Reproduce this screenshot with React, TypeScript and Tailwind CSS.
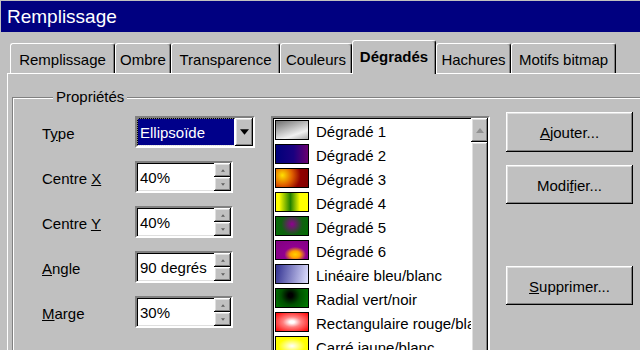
const TABS = [
  { label: "Remplissage", w: "w-[105px]" },
  { label: "Ombre", w: "w-[56px]" },
  { label: "Transparence", w: "w-[109px]" },
  { label: "Couleurs", w: "w-[72px]" },
  { label: "Dégradés", w: "w-[84px]", active: true },
  { label: "Hachures", w: "w-[75px]" },
  { label: "Motifs bitmap", w: "w-[105px]" },
];

const GRADIENTS = [
  { label: "Dégradé 1", bg: "bg-[linear-gradient(160deg,#6e6e6e,#f0f0f0_70%,#a8a8a8)]" },
  { label: "Dégradé 2", bg: "bg-[linear-gradient(90deg,#00007a,#1a0080_55%,#6a0070)]" },
  { label: "Dégradé 3", bg: "bg-[radial-gradient(circle_at_20%_35%,#ffe000,#e06000_35%,#900000_65%,#800000)]" },
  { label: "Dégradé 4", bg: "bg-[linear-gradient(90deg,#ffff00_10%,#208000_45%,#ffff00_75%)]" },
  { label: "Dégradé 5", bg: "bg-[radial-gradient(circle_at_50%_40%,#900090,#106010_55%,#007000)]" },
  { label: "Dégradé 6", bg: "bg-[radial-gradient(ellipse_at_60%_75%,#ffd000,#ffa000_18%,#900090_40%,#800080)]" },
  { label: "Linéaire bleu/blanc", bg: "bg-[linear-gradient(100deg,#303090,#e0e0ff)]" },
  { label: "Radial vert/noir", bg: "bg-[radial-gradient(circle_at_45%_35%,#000_10%,#005000_45%,#008000)]" },
  { label: "Rectangulaire rouge/blanc", bg: "bg-[radial-gradient(ellipse_at_center,#fff_10%,#ff8080_40%,#ff0000)]" },
  { label: "Carré jaune/blanc", bg: "bg-[radial-gradient(#fff,#ffff00_60%)]" },
];

const sunken =
  "border-2 border-t-[#808080] border-l-[#808080] border-r-white border-b-white shadow-[inset_1px_1px_0_#000,inset_-1px_-1px_0_#dfdfdf]";
const raised =
  "shadow-[inset_-1px_-1px_0_#000,inset_1px_1px_0_#fff,inset_-2px_-2px_0_#808080,inset_2px_2px_0_#dfdfdf]";

function Arrow({ up, color = "#000", size = 7 }: { up?: boolean; color?: string; size?: number }) {
  return (
    <svg width={size} height={Math.ceil(size / 2) + 1} viewBox="0 0 8 5">
      <polygon points={up ? "0,5 8,5 4,0" : "0,0 8,0 4,5"} fill={color} />
    </svg>
  );
}

function Spin({ value }: { value: string }) {
  return (
    <div className={`flex h-[32px] w-[98px] bg-white ${sunken}`}>
      <div className="flex flex-1 items-center pl-[3px] pt-[2px]">{value}</div>
      <div className="flex w-[17px] flex-col">
        <div className={`flex flex-1 items-center justify-center bg-[#c0c0c0] ${raised}`}>
          <Arrow up color="#606060" size={4} />
        </div>
        <div className={`flex flex-1 items-center justify-center bg-[#c0c0c0] ${raised}`}>
          <Arrow color="#606060" size={4} />
        </div>
      </div>
    </div>
  );
}

function Row({ label, children }: { label: React.ReactNode; children: React.ReactNode }) {
  return (
    <div className="flex h-[32px] items-center">
      <div className="w-[93px] pt-[4px]">{label}</div>
      {children}
    </div>
  );
}

function Button({ children, className = "" }: { children: React.ReactNode; className?: string }) {
  return (
    <button
      type="button"
      className={`flex w-[127px] items-center justify-center bg-[#c0c0c0] pt-[2px] ${raised} ${className}`}
    >
      {children}
    </button>
  );
}

export default function App() {
  return (
    <div className="flex h-[350px] w-[640px] flex-col overflow-hidden bg-[#c0c0c0] font-['Liberation_Sans',Arial,sans-serif] text-[15px] leading-[18px] text-black">
      <div className="ml-[1px] mt-[1px] flex h-[31px] shrink-0 items-center bg-[#000080] pl-[6px] pt-[1px] text-[19px] text-white">
        Remplissage
      </div>

      <div className="mt-[8px] flex shrink-0 items-end pl-[10px]">
        {TABS.map((t) =>
          t.active ? (
            <div
              key={t.label}
              className={`relative z-10 -mb-[1px] flex h-[34px] ${t.w} items-center justify-center rounded-t-[3px] border-l border-t border-r border-l-white border-t-white border-r-black bg-[#c0c0c0] pb-[2px] font-bold shadow-[inset_-1px_0_0_#808080]`}
            >
              {t.label}
            </div>
          ) : (
            <div
              key={t.label}
              className={`flex h-[30px] ${t.w} items-center justify-center rounded-t-[3px] border-l border-t border-r border-l-white border-t-white border-r-black pt-[2px] shadow-[inset_-1px_0_0_#808080]`}
            >
              {t.label}
            </div>
          ),
        )}
      </div>

      <div className="ml-[7px] min-h-0 flex-1 overflow-hidden border-l border-t border-white">
        <fieldset className="ml-[4px] mt-[14px] border-l border-t border-[#808080] pl-[29px] pt-[6px] shadow-[inset_1px_1px_0_#fff]">
          <legend className="ml-[11px] bg-[#c0c0c0] px-[3px]">Propriétés</legend>
          <div className="flex items-start">
            <div className="mt-[4px] flex shrink-0 flex-col gap-[13px]">
              <Row
                label={
                  <>
                    T<span className="underline">y</span>pe
                  </>
                }
              >
                <div className={`flex h-[32px] w-[120px] bg-white ${sunken}`}>
                  <div className="m-[1px] flex flex-1 items-center bg-[#00008a] pl-[2px] pt-[1px] text-white outline-1 outline-dotted outline-[#ffffff80]">
                    Ellipsoïde
                  </div>
                  <div className={`flex w-[18px] items-center justify-center bg-[#c0c0c0] ${raised}`}>
                    <Arrow size={9} />
                  </div>
                </div>
              </Row>
              <Row
                label={
                  <>
                    Centre <span className="underline">X</span>
                  </>
                }
              >
                <Spin value="40%" />
              </Row>
              <Row
                label={
                  <>
                    Centre <span className="underline">Y</span>
                  </>
                }
              >
                <Spin value="40%" />
              </Row>
              <Row
                label={
                  <>
                    <span className="underline">A</span>ngle
                  </>
                }
              >
                <Spin value="90 degrés" />
              </Row>
              <Row
                label={
                  <>
                    <span className="underline">M</span>arge
                  </>
                }
              >
                <Spin value="30%" />
              </Row>
            </div>

            <div className={`ml-[16px] mt-[4px] flex h-[240px] w-[219px] shrink-0 bg-white ${sunken}`}>
              <div className="flex min-w-0 flex-1 flex-col overflow-hidden">
                {GRADIENTS.map((g) => (
                  <div key={g.label} className="flex h-[24px] shrink-0 items-center whitespace-nowrap pl-[2px]">
                    <div className={`h-[20px] w-[34px] shrink-0 border border-black ${g.bg}`} />
                    <span className="ml-[7px] pt-[3px]">{g.label}</span>
                  </div>
                ))}
              </div>
              <div className="flex w-[17px] flex-col bg-[#d4d4d4]">
                <div className={`flex h-[24px] items-center justify-center bg-[#c0c0c0] ${raised}`}>
                  <Arrow up color="#909090" size={8} />
                </div>
                <div className={`flex-1 bg-[#c0c0c0] ${raised}`} />
              </div>
            </div>

            <div className="ml-[16px] flex shrink-0 flex-col">
              <Button className="h-[40px]">
                <span>
                  <span className="underline">A</span>jouter...
                </span>
              </Button>
              <Button className="mt-[13px] h-[39px]">
                <span>
                  Modi<span className="underline">f</span>ier...
                </span>
              </Button>
              <Button className="mt-[62px] h-[39px]">
                <span>
                  <span className="underline">S</span>upprimer...
                </span>
              </Button>
            </div>
          </div>
        </fieldset>
      </div>
    </div>
  );
}
